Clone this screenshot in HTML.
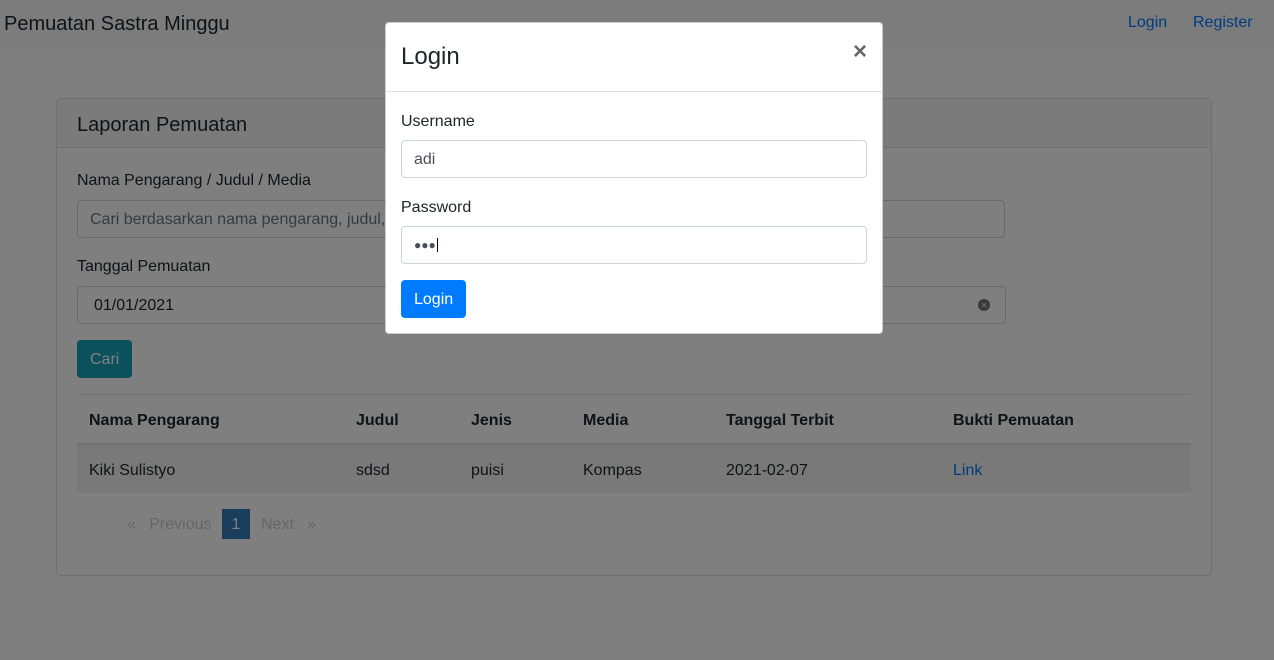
<!DOCTYPE html>
<html><head><style>
*{box-sizing:border-box}
body{margin:0;width:1274px;height:660px;overflow:hidden;font-family:"Liberation Sans",sans-serif;font-size:16px;line-height:1.5;color:#212529;background:#fff;position:relative}
.nav{height:48px;background:#f8f9fa;position:relative}
.brand{position:absolute;left:4px;top:9px;font-size:20px}
.nl{position:absolute;top:11px;color:#007bff}
.card{position:absolute;left:56px;top:98px;width:1156px;height:478px;border:1px solid #dfdfdf;border-radius:4px}
.ch{height:49px;background:#f7f7f7;border-bottom:1px solid #dfdfdf;padding:11px 20px;font-size:20px}
.abs{position:absolute}
.inp{position:absolute;height:38px;border:1px solid #ced4da;border-radius:4px;padding:7px 12px;background:#fff}
.ov{position:absolute;left:0;top:0;width:1274px;height:660px;background:rgba(0,0,0,.5)}
.modal{position:absolute;left:385px;top:22px;width:498px;height:312px;background:#fff;border-radius:4px;border:1px solid rgba(0,0,0,.2)}
</style></head><body>
<div class="nav"><span class="brand">Pemuatan Sastra Minggu</span><span class="nl" style="left:1128px">Login</span><span class="nl" style="left:1193px">Register</span></div>
<div class="card"><div class="ch">Laporan Pemuatan</div></div>
<div class="abs" style="left:77px;top:169px">Nama Pengarang / Judul / Media</div>
<div class="inp" style="left:77px;top:200px;width:928px;color:#6c757d">Cari berdasarkan nama pengarang, judul, atau media</div>
<div class="abs" style="left:77px;top:255px">Tanggal Pemuatan</div>
<div class="inp" style="left:77px;top:286px;width:929px;padding-left:16px">01/01/2021<span style="position:absolute;right:15px;top:12px;width:12px;height:12px;border-radius:50%;background:#777;color:#fff;font-size:9px;line-height:12px;text-align:center">×</span></div>
<div class="abs" style="left:77px;top:340px;width:55px;height:38px;background:#17a2b8;border-radius:4px;color:#fff;padding:8px 13px">Cari</div>
<div class="abs" style="left:77px;top:394px;width:1114px;border-top:1px solid #dee2e6"></div>
<div class="abs" style="left:77px;top:443px;width:1114px;height:2px;background:#dee2e6"></div>
<div class="abs" style="left:77px;top:445px;width:1114px;height:48px;background:#f2f2f2"></div>
<div class="abs" style="top:409px;left:89px;font-weight:bold">Nama Pengarang</div>
<div class="abs" style="top:409px;left:356px;font-weight:bold">Judul</div>
<div class="abs" style="top:409px;left:471px;font-weight:bold">Jenis</div>
<div class="abs" style="top:409px;left:583px;font-weight:bold">Media</div>
<div class="abs" style="top:409px;left:726px;font-weight:bold">Tanggal Terbit</div>
<div class="abs" style="top:409px;left:953px;font-weight:bold">Bukti Pemuatan</div>
<div class="abs" style="top:459px;left:89px">Kiki Sulistyo</div>
<div class="abs" style="top:459px;left:356px">sdsd</div>
<div class="abs" style="top:459px;left:471px">puisi</div>
<div class="abs" style="top:459px;left:583px">Kompas</div>
<div class="abs" style="top:459px;left:726px">2021-02-07</div>
<div class="abs" style="top:459px;left:953px;color:#007bff">Link</div>
<div class="abs" style="top:513px;left:127px;color:#ccc">«&nbsp;&nbsp; Previous</div>
<div class="abs" style="top:509px;left:222px;width:28px;height:30px;background:#337ab7;color:#fff;text-align:center;padding-top:4px">1</div>
<div class="abs" style="top:513px;left:261px;color:#ccc">Next &nbsp;&nbsp;»</div>
<div class="ov"></div>
<div class="modal">
<div style="height:69px;border-bottom:1px solid #dee2e6;position:relative"><span style="position:absolute;left:15px;top:16px;font-size:24px">Login</span><span style="position:absolute;right:15px;top:11px;font-size:24px;font-weight:bold;color:#666">×</span></div>
<div class="abs" style="left:15px;top:87px">Username</div>
<div class="inp" style="left:15px;top:117px;width:466px;color:#495057">adi</div>
<div class="abs" style="left:15px;top:173px">Password</div>
<div class="inp" style="left:15px;top:203px;width:466px;color:#495057;font-size:12px;padding-top:9px">●●●<span style="border-left:1px solid #000;margin-left:1px"></span></div>
<div class="abs" style="left:15px;top:257px;width:65px;height:38px;background:#007bff;border-radius:4px;color:#fff;padding:8px 13px">Login</div>
</div>
</body></html>
